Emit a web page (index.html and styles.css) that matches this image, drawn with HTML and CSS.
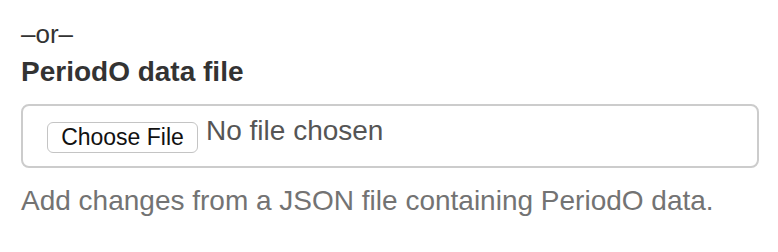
FILE: index.html
```html
<!DOCTYPE html>
<html>
<head>
<meta charset="utf-8">
<link rel="stylesheet" href="styles.css">
</head>
<body>
<div class="form">
  <div class="or">&ndash;or&ndash;</div>
  <label class="label">PeriodO data file</label>
  <div class="file-box">
    <button class="choose" type="button">Choose File</button>
    <span class="chosen">No file chosen</span>
  </div>
  <p class="help">Add changes from a JSON file containing PeriodO data.</p>
</div>
</body>
</html>
```
FILE: styles.css
```css
html, body {
  margin: 0;
  padding: 0;
  background: #fff;
}
.form {
  padding: 16px 19px 0 21px;
  font-family: "Liberation Sans", Arial, sans-serif;
  font-size: 28px;
  line-height: 40px;
  color: #333;
}
.or {
  font-size: 26px;
  line-height: 36px;
  height: 36px;
}
.label {
  display: block;
  font-weight: bold;
  margin-bottom: 12px;
}
.file-box {
  box-sizing: border-box;
  height: 64px;
  border: 2px solid #ccc;
  border-radius: 8px;
  display: flex;
  align-items: flex-start;
  padding: 16px 0 0 24px;
}
.choose {
  box-sizing: border-box;
  flex: none;
  height: 31px;
  width: 151px;
  padding: 0;
  background: #fff;
  border: 1px solid #c4c4c4;
  border-radius: 6px;
  font-family: "Liberation Sans", Arial, sans-serif;
  font-size: 23px;
  color: #111;
  line-height: 29px;
}
.chosen {
  margin: -6px 0 0 8px;
  font-size: 28px;
  color: #555;
  line-height: 30px;
}
.help {
  margin: 13px 0 0;
  color: #737373;
}
```
